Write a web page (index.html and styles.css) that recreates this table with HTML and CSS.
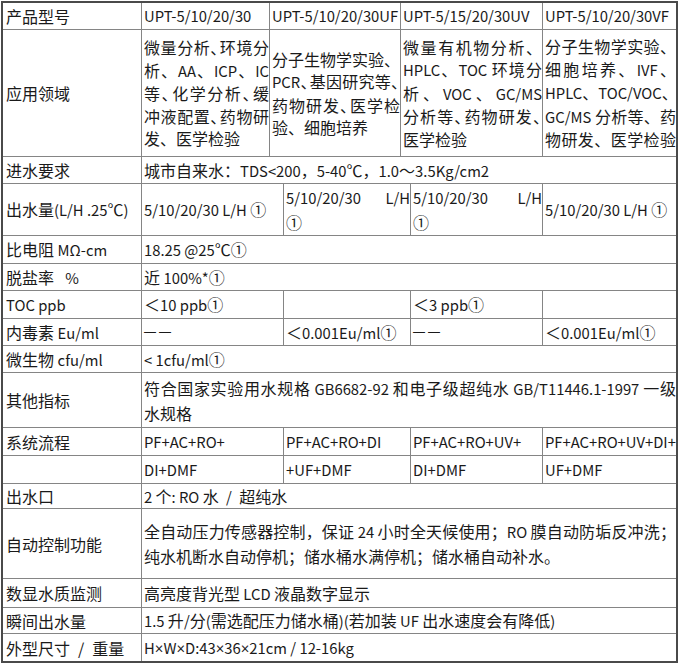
FILE: index.html
```html
<!DOCTYPE html>
<html lang="zh-CN">
<head>
<meta charset="utf-8">
<title>产品参数</title>
<link rel="stylesheet" href="styles.css">
</head>
<body>
<div class="t">
  <div class="c k"><div>产品型号</div></div>
  <div class="c e"><div>UPT-5/10/20/30</div></div>
  <div class="c s2 e"><div>UPT-5/10/20/30UF</div></div>
  <div class="c s2 e"><div>UPT-5/15/20/30UV</div></div>
  <div class="c r e"><div>UPT-5/10/20/30VF</div></div>

  <div class="c k"><div>应用领域</div></div>
  <div class="c m">
    <div class="j">微量分析<span class="p">、</span>环境分</div>
    <div class="j">析、<span class="e">AA</span>、<span class="e">ICP</span>、<span class="e">IC</span></div>
    <div class="j">等<span class="p">、</span>化学分析<span class="p">、</span>缓</div>
    <div class="j">冲液配置<span class="p">、</span>药物研</div>
    <div>发、医学检验</div>
  </div>
  <div class="c s2 m">
    <div class="j">分子生物学实验、</div>
    <div class="j"><span class="e">PCR</span><span class="p">、</span>基因研究等<span class="p">、</span></div>
    <div class="j">药物研发<span class="p">、</span>医学检</div>
    <div>验、细胞培养</div>
  </div>
  <div class="c s2 m">
    <div class="j">微量有机物分析、</div>
    <div class="j"><span class="e">HPLC</span>、<span class="e">TOC </span>环境分</div>
    <div class="j">析、<span class="e">VOC</span>、<span class="e">GC/MS</span></div>
    <div class="j">分析等<span class="p">、</span>药物研发<span class="p">、</span></div>
    <div>医学检验</div>
  </div>
  <div class="c r m">
    <div class="j">分子生物学实验、</div>
    <div class="j">细胞培养、<span class="e">IVF</span>、</div>
    <div class="j"><span class="e">HPLC</span>、<span class="e">TOC/VOC</span>、</div>
    <div class="j"><span class="e">GC/MS </span>分析等、药</div>
    <div class="j">物研发、医学检验</div>
  </div>

  <div class="c k"><div>进水要求</div></div>
  <div class="c s6 r"><div>城市自来水：<span class="e">TDS&lt;200</span>，<span class="e">5-40</span>℃，<span class="e">1.0</span>～<span class="e">3.5Kg/cm2</span></div></div>

  <div class="c k"><div>出水量<span class="e">(L/H .25</span>℃<span class="e">)</span></div></div>
  <div class="c s2"><div><span class="e">5/10/20/30 L/H </span>①</div></div>
  <div class="c s2"><div class="j e">5/10/20/30 L/H</div><div>①</div></div>
  <div class="c"><div class="j e">5/10/20/30 L/H</div><div>①</div></div>
  <div class="c r"><div><span class="e">5/10/20/30 L/H </span>①</div></div>

  <div class="c k"><div>比电阻 <span class="e">MΩ-cm</span></div></div>
  <div class="c s6 r"><div><span class="e">18.25 @25</span>℃①</div></div>

  <div class="c k"><div>脱盐率&ensp;<span class="e">&nbsp;%</span></div></div>
  <div class="c s6 r"><div>近 <span class="e">100%*</span>①</div></div>

  <div class="c k e"><div>TOC ppb</div></div>
  <div class="c s2"><div>＜<span class="e">10 ppb</span>①</div></div>
  <div class="c s2"></div>
  <div class="c"><div>＜<span class="e">3 ppb</span>①</div></div>
  <div class="c r"></div>

  <div class="c k"><div>内毒素 <span class="e">Eu/ml</span></div></div>
  <div class="c s2"><div class="dash">——</div></div>
  <div class="c s2"><div>＜<span class="e">0.001Eu/ml</span>①</div></div>
  <div class="c"><div class="dash">——</div></div>
  <div class="c r"><div>＜<span class="e">0.001Eu/ml</span>①</div></div>

  <div class="c k"><div>微生物 <span class="e">cfu/ml</span></div></div>
  <div class="c s6 r"><div><span class="e">&lt; 1cfu/ml</span>①</div></div>

  <div class="c k"><div>其他指标</div></div>
  <div class="c s6 r">
    <div class="j">符合国家实验用水规格<span class="e"> GB6682-92 </span>和电子级超纯水<span class="e"> GB/T11446.1-1997 </span>一级</div>
    <div>水规格</div>
  </div>

  <div class="c k"><div>系统流程</div></div>
  <div class="c s2 e"><div>PF+AC+RO+</div></div>
  <div class="c s2 e"><div>PF+AC+RO+DI</div></div>
  <div class="c e"><div>PF+AC+RO+UV+</div></div>
  <div class="c r e"><div>PF+AC+RO+UV+DI+</div></div>

  <div class="c k"></div>
  <div class="c s2 e"><div>DI+DMF</div></div>
  <div class="c s2 e"><div>+UF+DMF</div></div>
  <div class="c e"><div>DI+DMF</div></div>
  <div class="c r e"><div>UF+DMF</div></div>

  <div class="c k"><div>出水口</div></div>
  <div class="c s6 r"><div><span class="e">2 </span>个<span class="e">: RO </span>水<span class="e">&ensp;/&ensp;</span>超纯水</div></div>

  <div class="c k"><div>自动控制功能</div></div>
  <div class="c s6 r">
    <div class="j">全自动压力传感器控制，保证<span class="e"> 24 </span>小时全天候使用；<span class="e">RO </span>膜自动防垢反冲洗；</div>
    <div>纯水机断水自动停机；储水桶水满停机；储水桶自动补水。</div>
  </div>

  <div class="c k"><div>数显水质监测</div></div>
  <div class="c s6 r"><div>高亮度背光型<span class="e"> LCD </span>液晶数字显示</div></div>

  <div class="c k"><div>瞬间出水量</div></div>
  <div class="c s6 r"><div><span class="e">1.5 </span>升<span class="e">/</span>分<span class="e">(</span>需选配压力储水桶<span class="e">)(</span>若加装<span class="e"> UF </span>出水速度会有降低<span class="e">)</span></div></div>

  <div class="c k"><div>外型尺寸&ensp;/&ensp;重量</div></div>
  <div class="c s6 r"><div class="e">H<span class="x">×</span>W<span class="x">×</span>D:43<span class="x">×</span>36<span class="x">×</span>21cm / 12-16kg</div></div>
</div>
</body>
</html>
```

FILE: styles.css
```css
html, body {
  margin: 0;
  padding: 0;
  background: #ffffff;
}

.t {
  display: grid;
  grid-template-columns: 139px 128px 14px 117px 10px 132px 133px;
  grid-template-rows: 27px 127px 27px 52px 28px 27px 28px 27px 27px 55px 28px 28px 25px 70px 29px 26px 27px;
  width: max-content;
  margin: 1px 0 0 1px;
  border: 2px solid #4a4a4a;
  font-family: "Noto Sans CJK SC", "Noto Sans", sans-serif;
  font-size: 16px;
  line-height: 24px;
  color: #1a1a1a;
}

.c {
  box-sizing: border-box;
  display: flex;
  flex-direction: column;
  justify-content: center;
  min-width: 0;
  padding: 0 0 0 2px;
  border-right: 1px solid #858585;
  border-bottom: 1px solid #858585;
  white-space: nowrap;
}

.k {
  padding-left: 3px;
}

.s2 {
  grid-column: span 2;
}

.s6 {
  grid-column: span 6;
}

.r {
  border-right: 0;
}

.t > .c:nth-last-child(-n+2) {
  border-bottom: 0;
}

.m {
  line-height: 22.4px;
}

.j {
  white-space: nowrap;
  text-align: justify;
  text-align-last: justify;
}

.p {
  letter-spacing: -7px;
}

.e {
  font-size: 14.8px;
}

.x {
  font-family: "Lato", sans-serif;
}

.dash {
  font-family: "Liberation Sans", sans-serif;
  font-size: 12px;
  letter-spacing: 3px;
}
```
